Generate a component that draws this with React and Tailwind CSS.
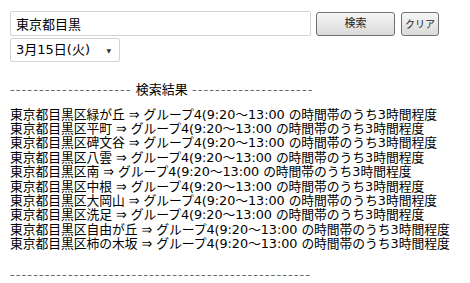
const RESULTS = [
  "緑が丘",
  "平町",
  "碑文谷",
  "八雲",
  "南",
  "中根",
  "大岡山",
  "洗足",
  "自由が丘",
  "柿の木坂",
];

const FONT = "font-['DejaVu_Sans','Noto_Sans_CJK_JP',sans-serif]";

export default function App() {
  return (
    <div className={`w-[470px] h-[283px] bg-white text-black ${FONT} text-[13px] overflow-hidden pl-[10px] pt-[11px]`}>
      {/* search form */}
      <div className="flex items-start">
        <input
          defaultValue="東京都目黒"
          className="w-[301px] h-[25px] border border-[#d4d4d4] rounded-[2px] px-[5px] text-[13px] outline-none"
        />
        <button className="ml-[5px] mt-[1px] w-[79px] h-[24px] border border-[#707070] rounded-[3px] bg-gradient-to-b from-[#f6f6f6] to-[#dadada] text-[11px] text-[#222]">
          検索
        </button>
        <button className="ml-[6px] mt-[1px] w-[38px] h-[24px] border border-[#707070] rounded-[3px] bg-gradient-to-b from-[#f6f6f6] to-[#dadada] text-[10px] text-[#222]">
          クリア
        </button>
      </div>
      <div className="mt-[2px] w-[110px] h-[24px] border border-[#d4d4d4] rounded-[2px] flex items-center px-[5px] text-[13px]">
        <span className="flex-1">3月15日(火)</span>
        <span className="text-[6px] mr-[3px] text-[#333]">▼</span>
      </div>

      {/* results */}
      <div className="mt-[18px] text-[#666] tracking-[1.1px] whitespace-nowrap">
        ---------------------<span className="text-black tracking-normal"> 検索結果 </span>---------------------
      </div>
      <div className="mt-[8px] leading-[14.4px] text-[12.8px] tracking-[-0.05px]">
        {RESULTS.map((r) => (
          <div key={r} className="whitespace-nowrap">
            東京都目黒区{r} ⇒ グループ4(9:20～13:00 の時間帯のうち3時間程度
          </div>
        ))}
      </div>
      <div className="mt-[13px] text-[#666] tracking-[1.1px] whitespace-nowrap">
        ----------------------------------------------------
      </div>
    </div>
  );
}
